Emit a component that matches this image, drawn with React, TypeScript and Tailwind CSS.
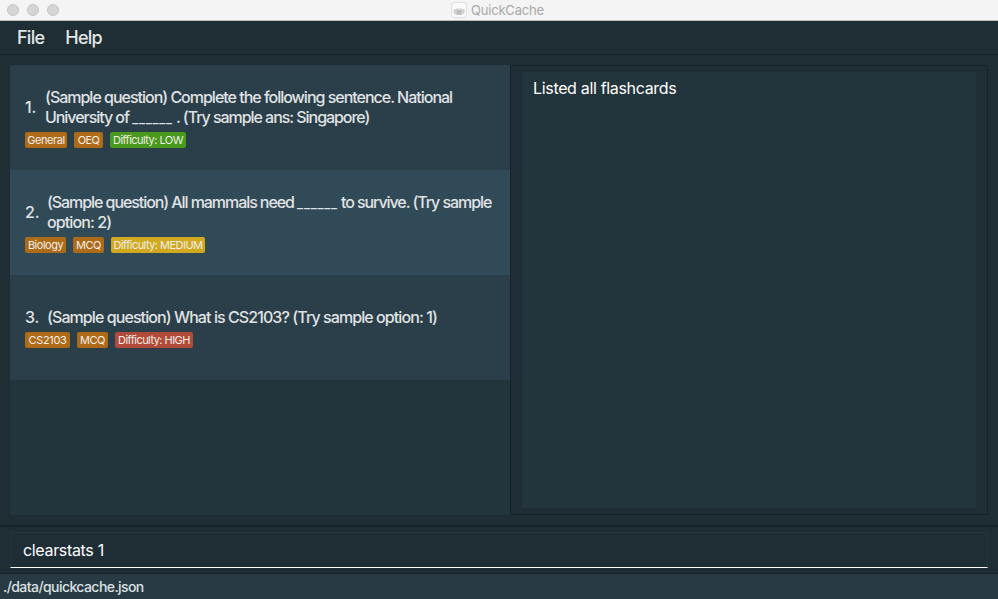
type Card = {
  id: number;
  lines: { parts: string[]; style: string }[];
  indent: string;
  shade: string;
  tags: { text: string; style: string }[];
};

const cards: Card[] = [
  {
    id: 1,
    lines: [
      { parts: ['(Sample question) Complete the following sentence. National'], style: 'tracking-[-1.01px]' },
      { parts: ['University of ', '______', ' . (Try sample ans: Singapore)'], style: 'tracking-[-1.05px]' },
    ],
    indent: 'w-[20px]',
    shade: 'bg-[#2a3f49]',
    tags: [
      { text: 'General', style: 'w-[42px] bg-[#ad6b18] tracking-[-0.4px]' },
      { text: 'OEQ', style: 'w-[29px] bg-[#ad6b18] tracking-[-0.6px]' },
      { text: 'Difficulty: LOW', style: 'w-[76px] bg-[#48991c] tracking-[-0.53px]' },
    ],
  },
  {
    id: 2,
    lines: [
      { parts: ['(Sample question) All mammals need ', '______', ' to survive. (Try sample'], style: 'tracking-[-1.07px]' },
      { parts: ['option: 2)'], style: 'tracking-[-0.9px]' },
    ],
    indent: 'w-[22px]',
    shade: 'bg-[#314a58]',
    tags: [
      { text: 'Biology', style: 'w-[41px] bg-[#ad6b18] tracking-[-0.5px]' },
      { text: 'MCQ', style: 'w-[31px] bg-[#ad6b18] tracking-[-0.5px]' },
      { text: 'Difficulty: MEDIUM', style: 'w-[94px] bg-[#d1a91f] tracking-[-0.53px]' },
    ],
  },
  {
    id: 3,
    lines: [{ parts: ['(Sample question) What is CS2103? (Try sample option: 1)'], style: 'tracking-[-0.92px]' }],
    indent: 'w-[22px]',
    shade: 'bg-[#2a3f49]',
    tags: [
      { text: 'CS2103', style: 'w-[45px] bg-[#ad6b18] tracking-[-0.35px]' },
      { text: 'MCQ', style: 'w-[31px] bg-[#ad6b18] tracking-[-0.5px]' },
      { text: 'Difficulty: HIGH', style: 'w-[78px] bg-[#b24a3a] tracking-[-0.53px]' },
    ],
  },
];

function TitleBar() {
  return (
    <header className="flex h-[21px] shrink-0 items-center border-b border-[#b9bdbd] bg-[#f4f4f4]">
      <div className="flex w-[451px] gap-2 pl-[7px]">
        <span className="size-3 rounded-full border border-[#c4c4c4] bg-[#d5d5d5]" />
        <span className="size-3 rounded-full border border-[#c4c4c4] bg-[#d5d5d5]" />
        <span className="size-3 rounded-full border border-[#c4c4c4] bg-[#d5d5d5]" />
      </div>
      <svg className="h-4 w-4" viewBox="0 0 16 16">
        <rect x="0.5" y="0.5" width="15" height="15" rx="3" fill="#fafafa" stroke="#dedede" />
        <path d="M2.3 8.5 Q3 6.5 5 7.2 L6.5 5.8 L8 7.2 L9.7 5.8 L11 7.2 Q13.2 6.5 13.7 8.5 L13.4 11.5 L10.8 13 H5.5 L2.7 11.5 Z" fill="#d2d2d2" />
        <rect x="5.5" y="8" width="5" height="4.5" rx="1" fill="#bcbcbc" />
      </svg>
      <span className="ml-1 text-[13px] leading-[20px] tracking-[-0.2px] text-[#a9a9a9]">QuickCache</span>
    </header>
  );
}

function FlashCard({ card }: { card: Card }) {
  return (
    <li className={`flex h-[105px] flex-col justify-center pl-[15px] ${card.shade}`}>
      <div className="flex items-center text-[16px] leading-[20px] font-[450] text-[#e0e3e5]">
        <span className={`shrink-0 tracking-[-0.2px] ${card.indent}`}>{card.id}.</span>
        <div className="whitespace-nowrap">
          {card.lines.map((line) => (
            <p key={line.parts[0]} className={`h-5 ${line.style}`}>
              {line.parts.map((part) =>
                part === '______' ? (
                  <span key={part} className="text-[13px] tracking-[0.75px]">{part}</span>
                ) : (
                  <span key={part}>{part}</span>
                ),
              )}
            </p>
          ))}
        </div>
      </div>
      <div className="mt-[5px] flex gap-[7px]">
        {card.tags.map((tag) => (
          <span key={tag.text} className={`h-4 rounded-[2px] text-center text-[11px] leading-4 whitespace-nowrap text-[#efeeea] ${tag.style}`}>
            {tag.text}
          </span>
        ))}
      </div>
    </li>
  );
}

export default function App() {
  return (
    <div className="flex h-[599px] w-[998px] flex-col overflow-hidden bg-[#1f2e35] font-['Inter',sans-serif]">
      <TitleBar />
      <nav className="flex h-[34px] shrink-0 gap-[21px] border-b border-[#16242a] pl-[17px] text-[18px] leading-[33px] font-[450] text-[#e3e6e7]">
        <span className="tracking-[-0.75px]">File</span>
        <span className="tracking-[-0.75px]">Help</span>
      </nav>
      <main className="flex h-[470px] shrink-0 px-[10px] pt-[10px] pb-[10px]">
        <ul className="h-[450px] w-[500px] bg-[#23353c]">
          {cards.map((card) => <FlashCard key={card.id} card={card} />)}
        </ul>
        <section className="h-[450px] w-[478px] border border-[#16242a] pt-[6px] pr-[11px] pb-[6px] pl-[11px]">
          <div className="h-full bg-[#23353c] pt-[6px] pl-[11px] text-[16px] leading-[20px] text-white">
            <span className="tracking-[-0.33px]">Listed all flashcards</span>
          </div>
        </section>
      </main>
      <div className="h-[49px] shrink-0 border-t-2 border-b border-t-[#16242a] border-b-[#16242a] px-[10px] pt-[5px]">
        <div className="h-9 border border-[#23353c] border-b-white pl-[12px] text-[16px] leading-[34px] text-white">
          <span className="tracking-[-0.33px]">clearstats 1</span>
        </div>
      </div>
      <footer className="flex-1 border-b border-[#3b505c] bg-[#283a44] pl-[3px] text-[14px] leading-[25px] font-[450] text-[#dde1e3]">
        <span className="tracking-[-0.57px]">./data/quickcache.json</span>
      </footer>
    </div>
  );
}
